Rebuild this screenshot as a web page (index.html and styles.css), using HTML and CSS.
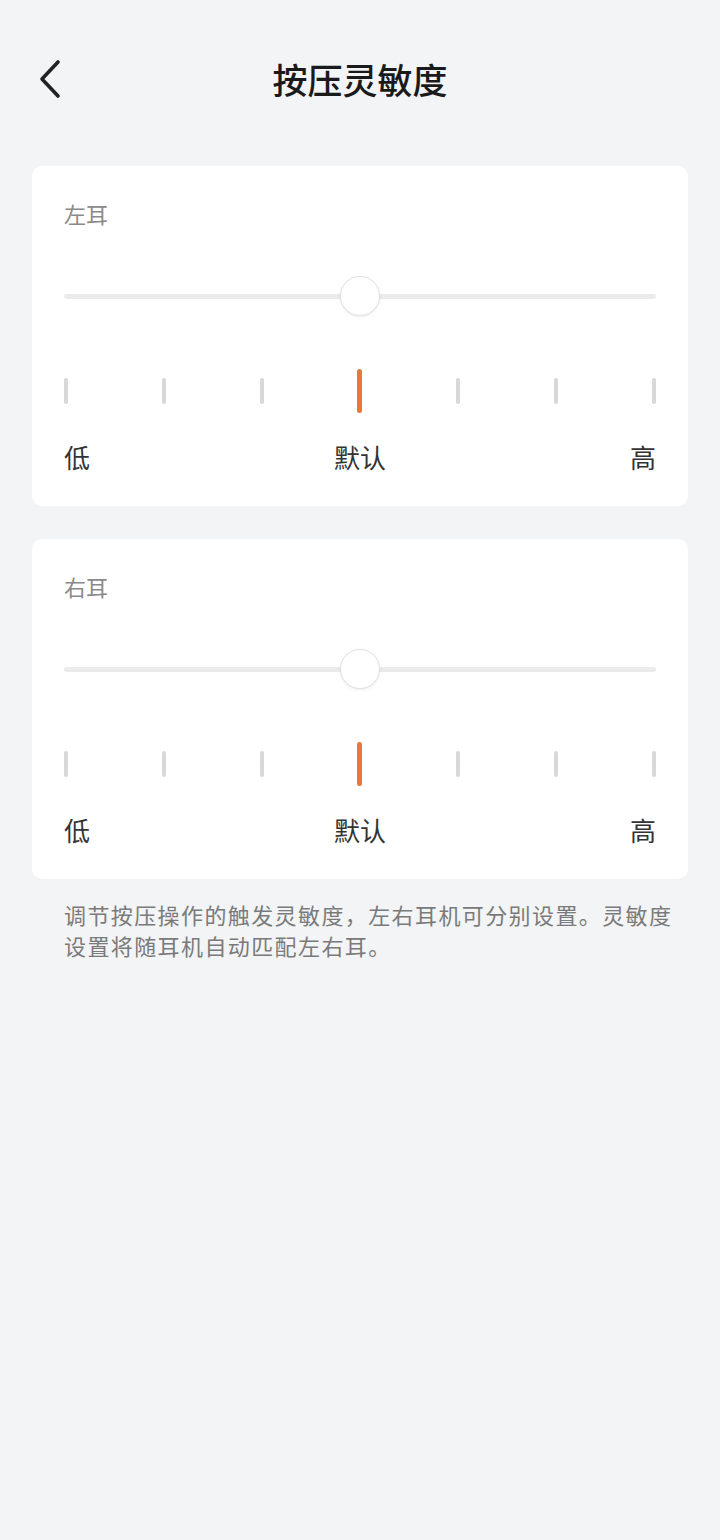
FILE: index.html
```html
<!DOCTYPE html>
<html lang="zh-CN">
<head>
  <meta charset="UTF-8" />
  <meta name="viewport" content="width=device-width, initial-scale=1" />
  <title>按压灵敏度</title>
  <link rel="stylesheet" href="styles.css">
</head>
<body>

<header class="topbar">
  <button class="back-btn" aria-label="返回">
    <svg width="28" height="40" viewBox="0 0 28 40">
      <path d="M20 3 L4 20 L20 37" fill="none" stroke="#222" stroke-width="3.6" stroke-linecap="round" stroke-linejoin="round"/>
    </svg>
  </button>
  <h1>按压灵敏度</h1>
</header>

<main>
  <!-- 左耳 -->
  <section class="card">
    <div class="card-title">左耳</div>
    <div class="slider">
      <div class="track"></div>
      <div class="thumb"></div>
    </div>
    <div class="ticks">
      <span class="tick"></span>
      <span class="tick"></span>
      <span class="tick"></span>
      <span class="tick active"></span>
      <span class="tick"></span>
      <span class="tick"></span>
      <span class="tick"></span>
    </div>
    <div class="scale-labels">
      <span>低</span>
      <span>默认</span>
      <span>高</span>
    </div>
  </section>

  <!-- 右耳 -->
  <section class="card">
    <div class="card-title">右耳</div>
    <div class="slider">
      <div class="track"></div>
      <div class="thumb"></div>
    </div>
    <div class="ticks">
      <span class="tick"></span>
      <span class="tick"></span>
      <span class="tick"></span>
      <span class="tick active"></span>
      <span class="tick"></span>
      <span class="tick"></span>
      <span class="tick"></span>
    </div>
    <div class="scale-labels">
      <span>低</span>
      <span>默认</span>
      <span>高</span>
    </div>
  </section>

  <p class="note">调节按压操作的触发灵敏度，左右耳机可分别设置。灵敏度设置将随耳机自动匹配左右耳。</p>
</main>

</body>
</html>
```

FILE: styles.css
```css
body {
  margin: 0;
  background-color: #f3f4f6;
  font-family: "Noto Sans CJK SC", "Noto Sans", sans-serif;
  color: #333;
}
.topbar {
  position: relative;
  height: 76px;
  margin-top: 40px;
  display: flex;
  align-items: center;
  justify-content: center;
}
.back-btn {
  position: absolute;
  left: 38px;
  top: 19px;
  padding: 0;
  border: none;
  background: none;
  line-height: 0;
  cursor: pointer;
}
.topbar h1 {
  margin: 0;
  font-size: 35px;
  font-weight: 500;
  color: #1a1a1a;
}
main {
  padding: 50px 32px 0;
}
.card {
  background-color: white;
  border-radius: 10px;
  padding: 32px 32px 31px;
  margin-bottom: 33px;
}
.card:last-of-type {
  margin-bottom: 20px;
}
.card-title {
  font-size: 22px;
  line-height: 30px;
  color: #8a8a8a;
}
.slider {
  position: relative;
  height: 40px;
  margin-top: 48px;
  display: flex;
  align-items: center;
}
.track {
  width: 100%;
  height: 5px;
  border-radius: 3px;
  background-color: #ebebeb;
}
.thumb {
  position: absolute;
  left: 50%;
  top: 0;
  width: 38px;
  height: 38px;
  margin-left: -20px;
  border-radius: 50%;
  background: white;
  border: 1px solid #e2e2e2;
  box-shadow: 0 1px 3px rgba(0,0,0,0.08);
}
.ticks {
  display: flex;
  justify-content: space-between;
  align-items: center;
  height: 44px;
  margin-top: 53px;
}
.tick {
  width: 4px;
  height: 26px;
  border-radius: 2px;
  background-color: #d8d8d8;
}
.tick.active {
  width: 5px;
  height: 44px;
  border-radius: 3px;
  background-color: #e8773a;
}
.scale-labels {
  display: flex;
  justify-content: space-between;
  margin-top: 26px;
  font-size: 26px;
  line-height: 36px;
  color: #333;
}
.note {
  margin: 0;
  padding: 0 0 0 32px;
  font-size: 22px;
  line-height: 31px;
  letter-spacing: 1.4px;
  color: #7a7a7a;
}
```
